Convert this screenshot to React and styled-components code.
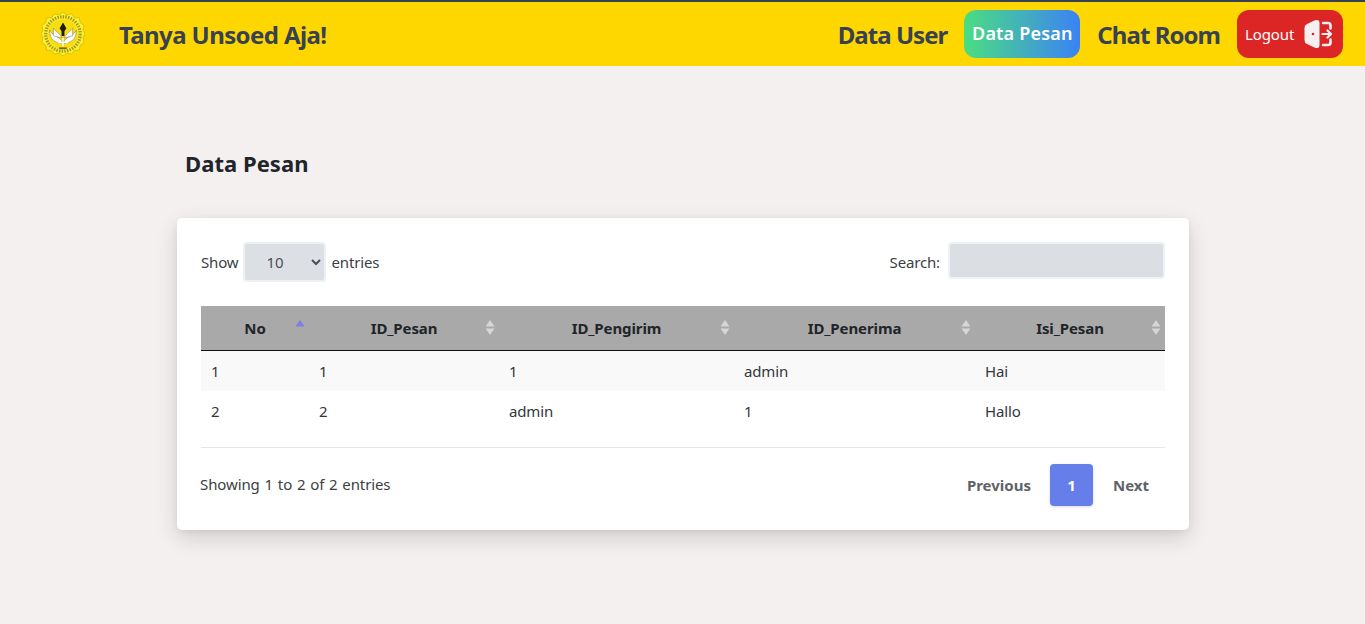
import styled, { createGlobalStyle } from "styled-components";

const GlobalStyle = createGlobalStyle`
  * {
    box-sizing: border-box;
  }
  body {
    margin: 0;
    background: #f4f0f0;
    font-family: "Noto Sans", "Open Sans", sans-serif;
    color: #212529;
  }
`;

const Nav = styled.nav`
  height: 66px;
  background: #ffd700;
  border-top: 2px solid #374151;
  display: flex;
  align-items: center;
  justify-content: space-between;
  padding: 0 22px 0 41px;
`;

const Brand = styled.div`
  display: flex;
  align-items: center;
  gap: 34px;
  font-size: 24px;
  font-weight: 700;
  letter-spacing: -0.6px;
  color: #374151;
`;

const Menu = styled.div`
  display: flex;
  align-items: center;
  gap: 17px;
`;

const MenuLink = styled.a`
  font-size: 24px;
  font-weight: 700;
  letter-spacing: -0.95px;
  color: #374151;
`;

const ActiveLink = styled.a`
  height: 48px;
  width: 116px;
  border-radius: 12px;
  display: flex;
  align-items: center;
  justify-content: center;
  padding-bottom: 2px;
  font-size: 18px;
  font-weight: 600;
  letter-spacing: 0.2px;
  color: #fff;
  background: linear-gradient(to right, #4ade80, #3b82f6);
`;

const LogoutButton = styled.button`
  height: 48px;
  width: 106px;
  border: 0;
  border-radius: 12px;
  background: #dc2626;
  color: #fff;
  font: inherit;
  font-size: 15px;
  letter-spacing: -0.1px;
  display: flex;
  align-items: center;
  gap: 10px;
  padding: 0 0 0 8px;
`;

const Main = styled.main`
  width: 1012px;
  min-height: 558px;
  margin-left: 177px;
`;

const Title = styled.h1`
  margin: 0;
  padding: 82px 0 40px 8px;
  font-size: 22px;
  line-height: 30px;
  font-weight: 700;
  letter-spacing: 0.05px;
  color: #212529;
`;

const Card = styled.section`
  background: #fff;
  border-radius: 5px;
  height: 312px;
  padding: 24px;
  font-size: 15px;
  letter-spacing: -0.15px;
  box-shadow: 0 8px 22px rgba(0, 0, 0, 0.14), 0 2px 6px rgba(0, 0, 0, 0.06);
`;

const Controls = styled.div`
  display: flex;
  justify-content: space-between;
  align-items: center;
  height: 40px;
  margin-bottom: 24px;
`;

const Label = styled.label`
  display: flex;
  align-items: center;
  gap: 5px;
  color: #3a3f45;
`;

const EntriesSelect = styled.select`
  width: 83px;
  height: 40px;
  padding-left: 17px;
  border: 2px solid #edf0f4;
  border-radius: 4px;
  background: #dcdfe4;
  color: #495057;
  font: inherit;
`;

const SearchInput = styled.input`
  width: 217px;
  height: 37px;
  margin-left: 3px;
  margin-top: -4px;
  border: 2px solid #edf2f7;
  border-radius: 4px;
  background: #dbdee3;
`;

const Table = styled.table`
  width: 964px;
  table-layout: fixed;
  border-collapse: separate;
  border-spacing: 0;
`;

const HeadCell = styled.th`
  position: relative;
  height: 45px;
  padding: 0 10px;
  background: #a9a9a9;
  border-bottom: 1px solid #111;
  font-size: 15px;
  font-weight: 700;
  letter-spacing: -0.1px;
  color: #212529;
  text-align: center;
`;

const SortArrows = styled.svg`
  position: absolute;
  right: 4px;
  top: 14px;
`;

const Row = styled.tr`
  height: 40px;
  background: ${(p) => (p.$striped ? "#f9f9f9" : "#fff")};
`;

const Cell = styled.td`
  padding: 0 10px;
  color: #33373b;
`;

const Footer = styled.div`
  margin-top: 16px;
  padding-top: 16px;
  border-top: 1px solid #e5e7eb;
  display: flex;
  justify-content: space-between;
  align-items: flex-start;
`;

const Info = styled.div`
  padding-top: 10px;
  margin-left: -1px;
  letter-spacing: -0.1px;
  word-spacing: 1px;
  color: #3a3f45;
`;

const Pager = styled.div`
  display: flex;
  align-items: center;
`;

const PageLink = styled.a`
  padding: 0 16px;
  font-size: 15px;
  font-weight: 700;
  letter-spacing: 0;
  color: #5f6368;
`;

const PageCurrent = styled.a`
  width: 43px;
  height: 42px;
  margin: 0 4px 0 3px;
  display: flex;
  align-items: center;
  justify-content: center;
  border-radius: 4px;
  background: #667eea;
  color: #fff;
  font-size: 15px;
  font-weight: 700;
  box-shadow: 0 1px 3px rgba(0, 0, 0, 0.15);
`;

const Emblem = () => (
  <svg width="44" height="44" viewBox="0 0 46 46">
    <polygon
      points="23,0 27,3 32,2 35,6 40,6 41,11 45,14 44,19 46,23 44,27 45,32 41,35 40,40 35,40 32,44 27,43 23,46 19,43 14,44 11,40 6,40 5,35 1,32 2,27 0,23 2,19 1,14 5,11 6,6 11,6 14,2 19,3"
      fill="#fbef2e"
      stroke="#b8a818"
      strokeWidth="0.6"
    />
    <circle cx="23" cy="23" r="18" fill="none" stroke="#7a7420" strokeWidth="3.4" strokeDasharray="1.5 1.3" opacity="0.7" />
    <circle cx="23" cy="23" r="15.5" fill="#f7dc10" />
    <path d="M9 19 C11 24 17 25 22 30 L22 33 C15 32 9 29 9 19Z" fill="#fff" stroke="#555" strokeWidth="0.4" />
    <path d="M37 19 C35 24 29 25 24 30 L24 33 C31 32 37 29 37 19Z" fill="#fff" stroke="#555" strokeWidth="0.4" />
    <path d="M13 17 C16 21 20 23 22 27 L13 25Z" fill="#fff" stroke="#555" strokeWidth="0.4" />
    <path d="M33 17 C30 21 26 23 24 27 L33 25Z" fill="#fff" stroke="#555" strokeWidth="0.4" />
    <path d="M23 11 L26.5 17 L24.5 20 L24.5 25 L21.5 25 L21.5 20 L19.5 17Z" fill="#1c1c10" />
    <path d="M23 27 V36 M18 32 H28" stroke="#fff" strokeWidth="1.3" />
    <rect x="19" y="37" width="8" height="1.8" fill="#6b6a1e" />
  </svg>
);

const DoorIcon = () => (
  <svg width="28" height="30" viewBox="0 0 28 30" fill="none">
    <path d="M3 5 L11 1.2 Q15.5 0 15.5 4 V26 Q15.5 30 11 28.8 L3 25 Q0.5 24 0.5 21 V9 Q0.5 6 3 5Z" fill="#f4f0f0" />
    <circle cx="9" cy="15" r="1.3" fill="#dc2626" />
    <path d="M19 4 H24 Q26.5 4 26.5 6.5 V9.5 M19 26 H24 Q26.5 26 26.5 23.5 V20.5" stroke="#f4f0f0" strokeWidth="2.6" strokeLinecap="round" />
    <path d="M18.5 15 H27 M23.5 11.5 L27 15 L23.5 18.5" stroke="#f4f0f0" strokeWidth="2.2" strokeLinecap="round" strokeLinejoin="round" />
  </svg>
);

const Arrows = ({ active }) => (
  <SortArrows width="10" height="15" viewBox="0 0 10 15">
    <polygon points="5,0 9.5,6.5 0.5,6.5" fill={active ? "#7c7fe0" : "#d6d6d6"} />
    {!active && <polygon points="0.5,8.5 9.5,8.5 5,15" fill="#d6d6d6" />}
  </SortArrows>
);

const columns = [
  { name: "No", width: 108 },
  { name: "ID_Pesan", width: 190 },
  { name: "ID_Pengirim", width: 235 },
  { name: "ID_Penerima", width: 241 },
  { name: "Isi_Pesan", width: 190 },
];

const rows = [
  ["1", "1", "1", "admin", "Hai"],
  ["2", "2", "admin", "1", "Hallo"],
];

export default function App() {
  return (
    <>
      <GlobalStyle />
      <Nav>
        <Brand>
          <Emblem />
          <span>Tanya Unsoed Aja!</span>
        </Brand>
        <Menu>
          <MenuLink>Data User</MenuLink>
          <ActiveLink>Data Pesan</ActiveLink>
          <MenuLink>Chat Room</MenuLink>
          <LogoutButton>
            Logout
            <DoorIcon />
          </LogoutButton>
        </Menu>
      </Nav>
      <Main>
        <Title>Data Pesan</Title>
        <Card>
          <Controls>
            <Label>
              Show
              <EntriesSelect defaultValue="10">
                <option>10</option>
                <option>25</option>
                <option>50</option>
                <option>100</option>
              </EntriesSelect>
              entries
            </Label>
            <Label>
              Search:
              <SearchInput />
            </Label>
          </Controls>
          <Table>
            <colgroup>
              {columns.map((c) => (
                <col key={c.name} width={c.width} />
              ))}
            </colgroup>
            <thead>
              <tr>
                {columns.map((c, i) => (
                  <HeadCell key={c.name}>
                    {c.name}
                    <Arrows active={i === 0} />
                  </HeadCell>
                ))}
              </tr>
            </thead>
            <tbody>
              {rows.map((r, i) => (
                <Row key={i} $striped={i === 0}>
                  {r.map((v, j) => (
                    <Cell key={j}>{v}</Cell>
                  ))}
                </Row>
              ))}
            </tbody>
          </Table>
          <Footer>
            <Info>Showing 1 to 2 of 2 entries</Info>
            <Pager>
              <PageLink>Previous</PageLink>
              <PageCurrent>1</PageCurrent>
              <PageLink>Next</PageLink>
            </Pager>
          </Footer>
        </Card>
      </Main>
    </>
  );
}
